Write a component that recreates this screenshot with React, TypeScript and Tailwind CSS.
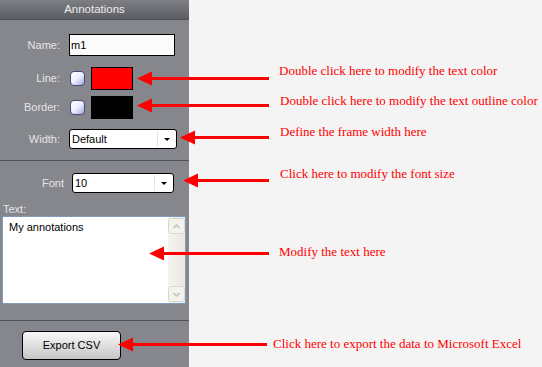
const Arrow = ({ className, len }: { className: string; len: number }) => (
  <svg className={"absolute " + className} width={len} height={15} viewBox={`0 0 ${len} 15`}>
    <polygon points="0,7.5 15,0.5 15,14.5" fill="#ff0000" />
    <rect x={14} y={6} width={len - 14} height={3} fill="#ff0000" />
  </svg>
);

const Callout = ({ className, text }: { className: string; text: string }) => (
  <div
    className={
      "absolute whitespace-nowrap text-[13px] leading-[15px] text-[#ff0000] font-['Liberation_Serif',serif] " +
      className
    }
  >
    {text}
  </div>
);

const Check = () => (
  <div className="ml-[10px] w-[15px] h-[15px] rounded-[4px] border border-[#4b4b78] bg-gradient-to-br from-white via-[#eeeeff] to-[#a4a4de]" />
);

const Select = ({ value, className }: { value: string; className: string }) => (
  <div
    className={
      "flex items-center h-[20px] rounded-[3px] border border-black bg-white text-black " + className
    }
  >
    <span className="flex-1 pl-[2px] leading-none">{value}</span>
    <div className="w-px h-[16px] bg-[#e4e4e4]" />
    <div className="w-[18px] flex justify-center">
      <div className="w-0 h-0 border-l-[3px] border-r-[3px] border-t-[3px] border-l-transparent border-r-transparent border-t-black" />
    </div>
  </div>
);

const Label = ({ text, className }: { text: string; className: string }) => (
  <span className={"text-right text-[#e4e4e6] " + className}>{text}</span>
);

export default function App() {
  return (
    <div className="relative flex w-[542px] h-[367px] bg-[#f4f4f4] font-['Liberation_Sans',Arial,sans-serif] text-[11px] overflow-hidden">
      <div className="flex flex-col w-[189px] h-full bg-[#86878c]">
        <div className="h-[20px] flex items-center justify-center border-b border-[#4f5055] bg-gradient-to-b from-[#7e7f84] to-[#5d5e63] text-[11.5px] text-[#ececee]">
          Annotations
        </div>

        <div className="flex items-center mt-[14px]">
          <Label text="Name:" className="w-[60px]" />
          <div className="ml-[9px] w-[106px] h-[22px] border border-black bg-[#fbfbfb] pl-px flex items-center text-black">
            m1
          </div>
        </div>

        <div className="flex items-center mt-[11px] h-[23px]">
          <Label text="Line:" className="w-[60px]" />
          <Check />
          <div className="ml-[6px] w-[42px] h-[23px] border border-black bg-[#ff0000]" />
        </div>

        <div className="flex items-center mt-[6px] h-[23px]">
          <Label text="Border:" className="w-[60px]" />
          <Check />
          <div className="ml-[6px] w-[42px] h-[23px] border border-black bg-black" />
        </div>

        <div className="flex items-center mt-[10px]">
          <Label text="Width:" className="w-[60px]" />
          <Select value="Default" className="ml-[9px] w-[108px]" />
        </div>

        <div className="mt-[11px] h-px bg-[#505156]" />

        <div className="flex items-center mt-[12px]">
          <Label text="Font" className="w-[64px]" />
          <Select value="10" className="ml-[8px] w-[102px]" />
        </div>

        <div className="mt-[10px] pl-[3px] h-[13px] leading-[13px] text-[#e4e4e6]">Text:</div>

        <div className="ml-[2px] w-[184px] h-[88px] border border-[#7f9db9] bg-white flex">
          <div className="flex-1 pl-[6px] pt-[3px] text-black leading-[14px]">My annotations</div>
          <div className="w-[17px] h-full flex flex-col justify-between py-px bg-gradient-to-r from-[#f4f3ee] to-[#ebe9df]">
            <div className="h-[16px] rounded-[3px] border border-[#d9d8cf] bg-[#f3f2ec] flex items-center justify-center">
              <svg width="7" height="5" viewBox="0 0 7 5">
                <path d="M0.5 4 L3.5 1 L6.5 4" stroke="#c3c3bb" strokeWidth="1.6" fill="none" />
              </svg>
            </div>
            <div className="h-[16px] rounded-[3px] border border-[#d9d8cf] bg-[#f3f2ec] flex items-center justify-center">
              <svg width="7" height="5" viewBox="0 0 7 5">
                <path d="M0.5 1 L3.5 4 L6.5 1" stroke="#c3c3bb" strokeWidth="1.6" fill="none" />
              </svg>
            </div>
          </div>
        </div>

        <div className="mt-[16px] h-px bg-[#505156]" />

        <div className="mt-[10px] ml-[22px] w-[99px] h-[29px] rounded-[4px] border border-black bg-gradient-to-b from-[#f9f9f9] to-[#c6c6c6] flex items-center justify-center text-black">
          Export CSV
        </div>
      </div>

      <div className="flex-1" />

      <Arrow className="left-[137px] top-[71px]" len={132} />
      <Arrow className="left-[137px] top-[98px]" len={132} />
      <Arrow className="left-[180px] top-[130px]" len={89} />
      <Arrow className="left-[183px] top-[173px]" len={86} />
      <Arrow className="left-[149px] top-[246px]" len={120} />
      <Arrow className="left-[118px] top-[337px]" len={149} />

      <Callout className="left-[279px] top-[63px]" text="Double click here to modify the text color" />
      <Callout className="left-[280px] top-[93px]" text="Double click here to modify the text outline color" />
      <Callout className="left-[280px] top-[124px]" text="Define the frame width here" />
      <Callout className="left-[280px] top-[166px]" text="Click here to modify the font size" />
      <Callout className="left-[279px] top-[244px]" text="Modify the text here" />
      <Callout className="left-[273px] top-[336px]" text="Click here to export the data to Microsoft Excel" />
    </div>
  );
}
